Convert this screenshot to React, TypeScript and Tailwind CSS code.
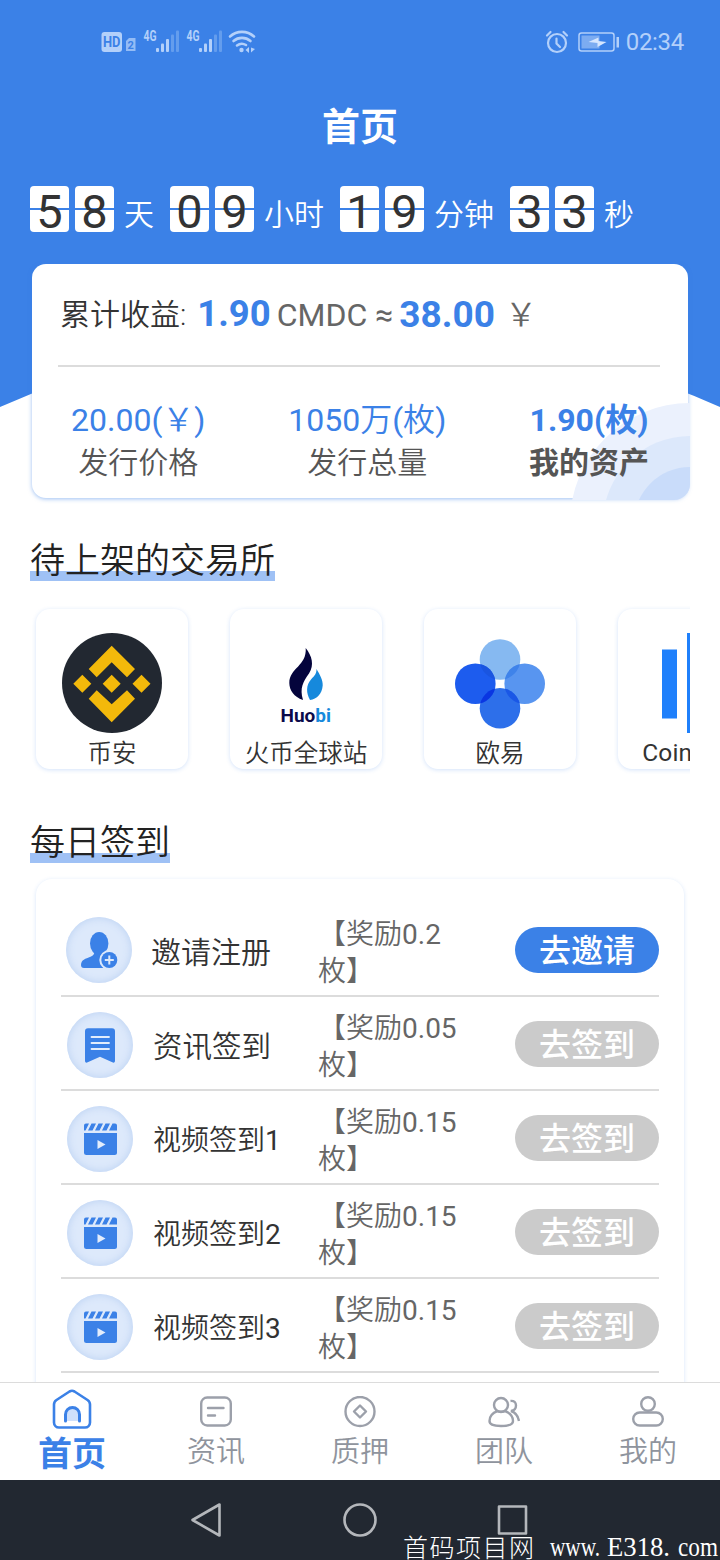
import React from "react";

const countdown = [
  { digits: ["5", "8"], unit: "天" },
  { digits: ["0", "9"], unit: "小时" },
  { digits: ["1", "9"], unit: "分钟" },
  { digits: ["3", "3"], unit: "秒" },
];

const StatusBar: React.FC = () => (
  <div className="flex h-[84px] items-center justify-between pl-[101px] pr-[36px] text-[#b3d0fa]">
    <svg width="156" height="28" viewBox="0 0 156 28" fill="currentColor">
      <rect x="0.5" y="4" width="20.5" height="20" rx="3" />
      <text x="2" y="19" fontSize="14" fontWeight="700" fontFamily="Roboto" fill="#3b81e7" textLength="17.5" lengthAdjust="spacingAndGlyphs">
        HD
      </text>
      <path d="M25 13l3-3h6.500v13H25z" opacity="0.75" />
      <text x="26.500" y="21" fontSize="11" fontWeight="700" fontFamily="Roboto" fill="#3b81e7">
        2
      </text>
      {[43, 86].map((x) => (
        <g key={x}>
          <text x={x - 0.5} y="12.500" fontSize="14.500" fontWeight="700" fontFamily="Roboto" textLength="13" lengthAdjust="spacingAndGlyphs">
            4G
          </text>
          <rect x={x + 12} y="20" width="3" height="4" rx="1" />
          <rect x={x + 17} y="15.500" width="3" height="8.500" rx="1" />
          <rect x={x + 22} y="11" width="3" height="13" rx="1" />
          <rect x={x + 27} y="6.500" width="3" height="17.500" rx="1" opacity="0.35" />
          <rect x={x + 32} y="2.500" width="3" height="21.500" rx="1" opacity="0.35" />
        </g>
      ))}
      <g fill="none" stroke="currentColor" strokeWidth="2.600" strokeLinecap="round">
        <path d="M129 8.500a18 18 0 0 1 24 0" />
        <path d="M132.500 13a13 13 0 0 1 17 0" />
        <path d="M136 17.500a8 8 0 0 1 9 -0.500" />
      </g>
      <circle cx="140.500" cy="22" r="2.200" />
      <path d="M144.500 22l3.500-3v6zM150 19.500v5l4-3.500z" />
    </svg>
    <div className="flex items-center">
      <svg width="24" height="24" viewBox="0 0 24 24" fill="none" stroke="currentColor" strokeWidth="2.200" strokeLinecap="round">
        <circle cx="12" cy="13" r="9" />
        <path d="M11.500 8.500v5l3.500 3.500M2 5.500L5.500 2M22 5.500L18.500 2" />
      </svg>
      <svg className="ml-[9px]" width="42" height="22" viewBox="0 0 42 22">
        <rect x="1" y="2" width="35" height="18" rx="2.500" fill="none" stroke="currentColor" strokeWidth="1.500" />
        <rect x="3.500" y="4.500" width="18" height="13" fill="currentColor" opacity="0.55" />
        <path d="M10.500 11l10-4.500v3.500l8 1-9 5v-4z" fill="#d5e6ff" />
        <rect x="38.500" y="6" width="2.500" height="10.500" fill="currentColor" />
      </svg>
      <span className="ml-[6px] text-[24px] leading-none tracking-[-0.3px]">02:34</span>
    </div>
  </div>
);

const Countdown: React.FC = () => (
  <div className="flex h-[46px] gap-4 pl-[30px]">
    {countdown.map((part) => (
      <div key={part.unit} className="flex">
        <div className="flex gap-[6px]">
          {part.digits.map((d, i) => (
            <div
              key={i}
              className="flex h-[46px] w-[39px] items-center justify-center rounded-[4px] bg-[linear-gradient(#fff_22px,#3b81e7_22px,#3b81e7_24px,#fff_24px)] pt-[5px] text-[47px] leading-none text-[#333]"
            >
              {d}
            </div>
          ))}
        </div>
        <span className="ml-[10px] pt-[8px] text-[30px] font-[350] leading-[42px] text-white">{part.unit}</span>
      </div>
    ))}
  </div>
);

const stats = [
  { value: "20.00", unit: "￥", label: "发行价格" },
  { value: "1050", scale: "万", unit: "枚", label: "发行总量" },
  { value: "1.90", unit: "枚", label: "我的资产", strong: true },
];

const EarningsCard: React.FC = () => (
  <div className="relative mx-8 mt-8 h-[234px] rounded-[14px] bg-white shadow-[0_1px_4px_rgba(59,129,231,0.5)]">
    <svg className="absolute -bottom-[2px] -right-[2px] rounded-br-[16px]" width="120" height="97" viewBox="0 0 120 97">
      <circle cx="120" cy="120" r="120" fill="#ebf1fd" />
      <circle cx="120" cy="120" r="87" fill="#dce8fb" />
      <circle cx="120" cy="120" r="56" fill="#c9dcfa" />
    </svg>
    <div className="relative flex h-[101px] items-center pl-7 text-[32px] leading-none text-[#666]">
      <span className="text-[30px] font-[350] text-[#333]">累计收益:</span>
      <span className="ml-[11px] text-[36.500px] font-bold text-[#3b81e7]">1.90</span>
      <span className="ml-[6px]">CMDC</span>
      <span className="ml-[8px]">≈</span>
      <span className="ml-[6px] text-[37px] font-bold text-[#3b81e7]">38.00</span>
      <span className="ml-[10px] font-[350]">￥</span>
    </div>
    <div className="relative ml-[26px] mr-7 h-[2px] bg-[#dcdcdc]" />
    <div className="relative flex justify-between pl-[39px] pr-[39px] pt-[32px]">
      {stats.map((s) => (
        <div key={s.label} className={s.strong ? "text-center font-bold" : "text-center"}>
          <div className="text-[32px] leading-[42px] text-[#3b81e7]">
            {s.value}
            <span className="font-[350]">{s.scale}</span>(
            <span className={s.strong ? "font-bold" : "font-[350]"}>{s.unit}</span>)
          </div>
          <div className={s.strong ? "text-[30px] leading-[44px] text-[#555]" : "text-[30px] font-[350] leading-[44px] text-[#555]"}>
            {s.label}
          </div>
        </div>
      ))}
    </div>
  </div>
);

const SectionTitle: React.FC<{ children: React.ReactNode }> = ({ children }) => (
  <h2 className="ml-[30px] h-[44px] w-fit bg-[linear-gradient(transparent_34px,#9fc1f5_34px)] text-[35px] font-[350] leading-[50px] text-[#222]">
    {children}
  </h2>
);

const BinanceLogo = () => (
  <svg className="shrink-0" width="100" height="100" viewBox="0 0 100 100">
    <circle cx="50" cy="50" r="50" fill="#222831" />
    <g fill="#f3b90b">
      <path d="M49.700 12.700L73 36l-8 8.300-15.300-15L34.700 44.300 26.700 36z" />
      <path d="M49.700 89.300L73 65.700l-8-8.400-15.300 14L34.700 57.300l-8 8.400z" />
      <path d="M49.700 41.700l9 9-9 9-9-9z" />
      <path d="M20.300 41.700l9 9-9 9-9-9z" />
      <path d="M79.500 41.700l9 9-9 9-9-9z" />
    </g>
  </svg>
);

const HuobiLogo = () => (
  <svg className="shrink-0" width="100" height="100" viewBox="0 0 100 100">
    <path fill="#04043c" d="M49.700 15C56 23 58.500 32 53 40.500 47 49 43.500 55 47 67 38 64 33.300 57 33.300 50 33.300 35 51 33 49.700 15z" />
    <path fill="#1689dc" d="M60.500 36C64 42 67 47 66.700 52.500 66 61 61 66 54 67 50 60 50 52 55 46.500 58.500 42.500 60.500 41 60.500 36z" />
    <text x="24.500" y="88.500" fontFamily="Roboto" fontWeight="700" fontSize="18.500" textLength="50.500" lengthAdjust="spacingAndGlyphs" fill="#0a0a4a">
      Huo<tspan fill="#1689dc">bi</tspan>
    </text>
  </svg>
);

const OkxLogo = () => (
  <svg className="shrink-0" width="100" height="100" viewBox="0 0 100 100">
    <defs>
      <clipPath id="okx-left">
        <circle cx="25.300" cy="50.700" r="20.300" />
      </clipPath>
      <clipPath id="okx-right">
        <circle cx="74.700" cy="50.700" r="20.300" />
      </clipPath>
    </defs>
    <circle cx="50" cy="26.500" r="20.300" fill="#86b9f1" />
    <circle cx="74.700" cy="50.700" r="20.300" fill="#5895f0" />
    <circle cx="50" cy="75.300" r="20.300" fill="#2d6fea" />
    <circle cx="25.300" cy="50.700" r="20.300" fill="#1d5cee" />
    <g clipPath="url(#okx-left)">
      <circle cx="50" cy="26.500" r="20.300" fill="#1a55e0" />
      <circle cx="50" cy="75.300" r="20.300" fill="#0a36e2" />
    </g>
    <g clipPath="url(#okx-right)">
      <circle cx="50" cy="26.500" r="20.300" fill="#3f83ea" />
      <circle cx="50" cy="75.300" r="20.300" fill="#1a57e6" />
    </g>
  </svg>
);

const CoinbaseLogo = () => (
  <svg className="shrink-0" width="100" height="100" viewBox="0 0 100 100" fill="#1f80fb">
    <rect x="18" y="16.500" width="15" height="69" />
    <rect x="43" y="0" width="15" height="100" />
    <rect x="68" y="16.500" width="15" height="69" />
  </svg>
);

const exchanges = [
  { name: "币安", Logo: BinanceLogo },
  { name: "火币全球站", Logo: HuobiLogo },
  { name: "欧易", Logo: OkxLogo },
  { name: "Coinbase", Logo: CoinbaseLogo },
];

const ExchangeList: React.FC = () => (
  <div className="mr-[30px] flex gap-[42px] overflow-hidden pb-3 pl-9 pt-7">
    {exchanges.map(({ name, Logo }) => (
      <div
        key={name}
        className="flex h-[160px] w-[152px] shrink-0 flex-col items-center rounded-[14px] bg-white pt-6 shadow-[0_1px_4px_rgba(59,129,231,0.22)]"
      >
        <Logo />
        <span
          className={
            name === "Coinbase"
              ? "shrink-0 text-[24.5px] leading-[40px] tracking-[0.2px] text-[#333]"
              : "shrink-0 text-[24.5px] font-[350] leading-[41px] text-[#333]"
          }
        >
          {name}
        </span>
      </div>
    ))}
  </div>
);

const InviteIcon = () => (
  <svg width="66" height="66" viewBox="0 0 66 66" fill="#3b81e7">
    <ellipse cx="33.200" cy="26.500" rx="9.200" ry="11.500" />
    <path d="M28.500 34c0 3-1 4.500-4 5.700-5 2-9.500 3-9.500 8.300 0 2 1 3 3 3h19L44 38c-5-1-6-2-6-5z" />
    <circle cx="43.300" cy="43" r="10" fill="#dde9fb" />
    <circle cx="43.300" cy="43" r="8" />
    <path d="M43.300 38.500v9M38.800 43h9" stroke="#dde9fb" strokeWidth="2" />
  </svg>
);

const NewsIcon = () => (
  <svg width="66" height="66" viewBox="0 0 66 66">
    <path d="M21 16.300h24a3 3 0 0 1 3 3v29.200c0 2-1 2.700-2.700 1.800L33 44.700l-12.300 5.600c-1.700.9-2.700.2-2.700-1.800V19.300a3 3 0 0 1 3-3z" fill="#3b81e7" />
    <path d="M24.500 25h17.500M24.500 31h17.500M24.500 37h17.500" stroke="#e3edfc" strokeWidth="1.800" strokeLinecap="round" />
  </svg>
);

const VideoIcon = () => (
  <svg width="66" height="66" viewBox="0 0 66 66" fill="#3b81e7">
    <path d="M19 17.500h3l-3.500 7h-1.500v-5a2 2 0 0 1 2-2zM24.500 17.500h4.500l-3.500 7h-4.500zM31.500 17.500h4.500l-3.500 7h-4.500zM38.500 17.500h4.500l-3.500 7h-4.500zM45.500 17.500h2.500a2 2 0 0 1 2 2v5h-8z" />
    <path d="M17 27h33v19.500a2.500 2.500 0 0 1-2.500 2.500h-28a2.500 2.500 0 0 1-2.500-2.500z" />
    <path d="M30.500 34l8 4.500-8 4.500z" fill="#e3edfc" />
  </svg>
);

const tasks = [
  { name: "邀请注册", reward: "0.2", Icon: InviteIcon, invite: true },
  { name: "资讯签到", reward: "0.05", Icon: NewsIcon },
  { name: "视频签到", index: 1, reward: "0.15", Icon: VideoIcon },
  { name: "视频签到", index: 2, reward: "0.15", Icon: VideoIcon },
  { name: "视频签到", index: 3, reward: "0.15", Icon: VideoIcon },
];

const TaskList: React.FC = () => (
  <div className="mx-9 mt-4 h-[600px] rounded-[16px] bg-white px-[25px] pt-6 shadow-[0_1px_4px_rgba(59,129,231,0.2)]">
    {tasks.map(({ name, index, reward, Icon, invite }) => (
      <div key={name + index} className="flex h-[94px] items-center border-b-2 border-[#dcdcdc]">
        <div
          className={
            invite
              ? "ml-[5px] mt-[2px] rounded-full bg-[#dde9fb] shadow-[inset_0_0_8px_#b9d0f2]"
              : "ml-[6px] mt-[4px] rounded-full bg-[#dde9fb] shadow-[inset_0_0_8px_#b9d0f2]"
          }
        >
          <Icon />
        </div>
        <span
          className={
            invite
              ? "ml-[19px] w-[167px] pt-[7px] text-[30px] font-[350] text-[#333]"
              : index
                ? "ml-5 w-[165px] pt-[8px] text-[28px] text-[#333]"
                : "ml-5 w-[165px] pt-[8px] text-[29.500px] font-[350] text-[#333]"
          }
        >
          <span className="font-[350]">{name}</span>
          {index}
        </span>
        <p className="w-[146px] pt-[7px] text-[28px] leading-[37px] text-[#666]">
          <span className="font-[350]">【奖励</span>
          {reward}
          <span className="font-[350]">枚】</span>
        </p>
        <button
          className={
            invite
              ? "ml-auto mt-[2px] h-[46px] w-[144px] rounded-full bg-[#3b81e7] text-[32px] font-medium leading-[49px] text-white"
              : "ml-auto mt-[2px] h-[46px] w-[144px] rounded-full bg-[#cbcbcb] text-[32px] font-medium leading-[49px] text-white"
          }
        >
          {invite ? "去邀请" : "去签到"}
        </button>
      </div>
    ))}
  </div>
);

const tabs = [
  {
    name: "资讯",
    icon: (
      <>
        <rect x="1.200" y="1.500" width="29.600" height="28" rx="6" />
        <path d="M8 12h15.500M8 19.500h7" strokeLinecap="round" />
      </>
    ),
  },
  {
    name: "质押",
    icon: (
      <>
        <circle cx="16" cy="15.500" r="14.500" />
        <path d="M16 9.500l6 6-6 6-6-6z" strokeLinejoin="round" />
      </>
    ),
  },
  {
    name: "团队",
    icon: (
      <>
        <circle cx="13" cy="9" r="7" />
        <path d="M9.500 15.200C4.500 17 1.500 21 1.500 25c0 3.700 4 5 11.500 5s12-1.300 12-5c0-4-3-8-8-9.800-2.500.8-5 .8-7.500 0z" />
        <path d="M22.500 5c3.500-.5 5.500 1.500 5.500 4.500 0 3-2 5-5 5.500 4.500 1.500 7 4.500 8 10" />
      </>
    ),
  },
  {
    name: "我的",
    icon: (
      <>
        <circle cx="16" cy="8" r="6.800" />
        <rect x="1.200" y="16.500" width="29.600" height="13" rx="6.500" />
      </>
    ),
  },
];

const TabBar: React.FC = () => (
  <nav className="flex h-[98px] shrink-0 border-t border-[#dcdcdc] bg-white">
    <a className="flex flex-1 flex-col items-center pt-[6px] text-[34px] font-bold leading-[50px] text-[#3b81e7]">
      <svg className="shrink-0" width="40" height="40" viewBox="0 0 40 40" fill="none" stroke="currentColor" strokeWidth="2.600">
        <path d="M17.500 2.500L4.500 11C2.500 12.300 2 13.500 2 15.500V33.500a5 5 0 0 0 5 5h26a5 5 0 0 0 5-5V15.500c0-2-.5-3.200-2.500-4.500L22.500 2.500a5 5 0 0 0-5 0z" />
        <path d="M13.500 32v-6.500a7 7 0 0 1 14 0V32" fill="#cfe0fb" strokeLinecap="round" strokeWidth="3" />
      </svg>
      <span>首页</span>
    </a>
    {tabs.map((tab) => (
      <a key={tab.name} className="flex flex-1 flex-col items-center pt-[13px] text-[29px] font-[350] leading-[48px] text-[#8f949d]">
        <svg className="shrink-0" width="32" height="32" viewBox="0 0 32 32" fill="none" stroke="#9ca0aa" strokeWidth="2.400">
          {tab.icon}
        </svg>
        <span>{tab.name}</span>
      </a>
    ))}
  </nav>
);

const SystemNav: React.FC = () => (
  <div className="relative flex h-20 shrink-0 items-center justify-center gap-[118px] bg-[#222831]">
    <svg width="34" height="36" viewBox="0 0 34 36" fill="none" stroke="#b4b7bb" strokeWidth="2.600" strokeLinejoin="round">
      <path d="M29.500 2.500v31L2.500 18z" />
    </svg>
    <svg width="36" height="36" viewBox="0 0 36 36" fill="none" stroke="#b4b7bb" strokeWidth="2.600">
      <circle cx="18" cy="18" r="15.500" />
    </svg>
    <svg width="34" height="36" viewBox="0 0 34 36" fill="none" stroke="#b4b7bb" strokeWidth="2.600" strokeLinejoin="round">
      <rect x="3" y="4.500" width="27" height="27" />
    </svg>
    <svg className="absolute bottom-0 right-0 overflow-visible" width="320" height="34" viewBox="0 0 320 34" fill="#fff" fontFamily="'Liberation Serif', 'Noto Sans CJK SC', serif" fontSize="27">
      <text x="3" y="31" fontSize="25" fontWeight="300" textLength="131">
        首码项目网
      </text>
      <text x="150" y="30" textLength="50" lengthAdjust="spacingAndGlyphs">
        www.
      </text>
      <text x="207" y="30" textLength="63" lengthAdjust="spacingAndGlyphs">
        E318.
      </text>
      <text x="278" y="30" textLength="40" lengthAdjust="spacingAndGlyphs">
        com
      </text>
    </svg>
  </div>
);

const App: React.FC = () => (
  <div
    lang="zh-CN"
    className="flex h-[1560px] w-[720px] flex-col overflow-hidden bg-white font-[Roboto,'Noto_Sans_CJK_SC',sans-serif]"
  >
    <main className="relative flex-1 overflow-hidden">
      <svg className="absolute left-0 top-0" width="720" height="407" viewBox="0 0 720 407">
        <path d="M0 0H720V407Q360 249 0 407z" fill="#3b81e7" />
      </svg>
      <div className="relative">
        <StatusBar />
        <h1 className="pb-[17px] pt-px text-center text-[38px] font-bold leading-[84px] text-white">首页</h1>
        <Countdown />
        <EarningsCard />
        <div className="mt-[39px]">
          <SectionTitle>待上架的交易所</SectionTitle>
          <ExchangeList />
        </div>
        <div className="mt-[38px]">
          <SectionTitle>每日签到</SectionTitle>
          <TaskList />
        </div>
      </div>
    </main>
    <TabBar />
    <SystemNav />
  </div>
);

export default App;
